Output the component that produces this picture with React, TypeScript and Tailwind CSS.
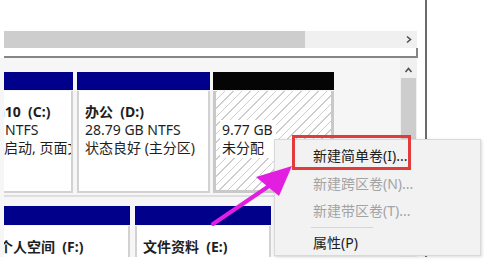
function Chevron({ dir }: { dir: "right" | "up" }) {
  return (
    <svg width="9" height="9" viewBox="0 0 9 9" className="block">
      {dir === "right" ? (
        <path d="M3 1.5 L6.5 4.5 L3 7.5" fill="none" stroke="#505050" strokeWidth="1.6" />
      ) : (
        <path d="M1.5 6 L4.5 2.5 L7.5 6" fill="none" stroke="#505050" strokeWidth="1.6" />
      )}
    </svg>
  );
}

function Bar({ black }: { black?: boolean }) {
  return <div className={black ? "h-[18px] shrink-0 bg-[#050505]" : "h-[18px] shrink-0 bg-[#00008a]"} />;
}

export default function App() {
  return (
    <div className="relative w-[485px] h-[265px] overflow-hidden bg-white text-[14px] leading-[18px] text-[#1e1e1e] font-['Noto_Sans','Noto_Sans_CJK_SC',sans-serif]">
      <div className="w-[427px] h-[257px] border-r-2 border-[#6a6a6a] flex flex-col">
        <div className="h-[31px] shrink-0" />
        {/* horizontal scrollbar */}
        <div className="ml-[4px] mr-[8px] h-[17px] shrink-0 flex bg-[#f0f0f0]">
          <div className="w-[301px] bg-[#cdcdcd]" />
          <div className="flex-1" />
          <div className="w-[17px] flex items-center justify-center">
            <Chevron dir="right" />
          </div>
        </div>
        <div className="ml-[4px] mr-[7px] h-[10px] shrink-0 border-b-2 border-r-2 border-[#858585]" />

        {/* disk area */}
        <div className="flex-1 min-h-0 flex overflow-hidden">
          <div className="flex-1 flex flex-col pl-[4px] bg-[#f6f6f6] overflow-hidden">
            <div className="mt-[14px] shrink-0 flex h-[125px] border-b-2 border-[#dedede]">
              <div className="w-[69px] flex flex-col">
                <Bar />
                <div className="h-[102px] shrink-0 mt-[1px] bg-white border-r-2 border-b-2 border-[#d2d2d2] overflow-hidden whitespace-nowrap pt-[12px]">
                  <div className="font-bold -ml-[26px]">Win10 &nbsp;(C:)</div>
                  <div className="ml-[1px]">NTFS</div>
                  <div>启动, 页面文件</div>
                </div>
              </div>
              <div className="w-[133px] ml-[4px] flex flex-col">
                <Bar />
                <div className="h-[102px] shrink-0 mt-[1px] bg-white border-2 border-t-0 border-[#d2d2d2] pl-[6px] pt-[12px] whitespace-nowrap">
                  <div className="font-bold">办公 &nbsp;(D:)</div>
                  <div>28.79 GB NTFS</div>
                  <div>状态良好 (主分区)</div>
                </div>
              </div>
              <div className="w-[121px] ml-[3px] flex flex-col">
                <Bar black />
                <div className="h-[102px] shrink-0 mt-[1px] border-[3px] border-t-0 border-[#c9c9c9] bg-[repeating-linear-gradient(135deg,#cdcdcd_0px,#cdcdcd_1px,#ffffff_1px,#ffffff_6px)] pl-[4px] pt-[29px] whitespace-nowrap">
                  <div className="w-[56px] bg-white pl-[2px] py-[1px]">
                    <div>9.77 GB</div>
                    <div>未分配</div>
                  </div>
                </div>
              </div>
            </div>

            <div className="mt-[9px] shrink-0 flex">
              <div className="w-[126px] flex flex-col">
                <div className="h-[19px] bg-[#00008a]" />
                <div className="h-[40px] mt-[1px] bg-white border-r-2 border-[#d2d2d2] overflow-hidden whitespace-nowrap pt-[12px]">
                  <div className="font-bold -ml-[5px]">个人空间 &nbsp;(F:)</div>
                </div>
              </div>
              <div className="w-[136px] ml-[5px] flex flex-col">
                <div className="h-[19px] bg-[#00008a]" />
                <div className="h-[40px] mt-[1px] bg-white border-2 border-b-0 border-t-0 border-[#d2d2d2] pl-[6px] pt-[12px] whitespace-nowrap">
                  <div className="font-bold">文件资料 &nbsp;(E:)</div>
                </div>
              </div>
            </div>
          </div>

          {/* vertical scrollbar */}
          <div className="w-[17px] mr-[8px] bg-[#f0f0f0] flex flex-col">
            <div className="h-[20px] shrink-0 flex items-end justify-center pb-[3px]">
              <Chevron dir="up" />
            </div>
            <div className="mx-[1px] h-[120px] shrink-0 bg-[#cdcdcd]" />
          </div>
        </div>
      </div>

      {/* context menu */}
      <div className="absolute left-[274px] top-[139px] w-[207px] h-[117px] bg-[#f2f2f2] border border-[#d9d9d9] shadow-[1px_1px_3px_rgba(0,0,0,0.15)] pt-[2px] whitespace-nowrap">
        <div className="h-[28px] flex items-center pl-[38px] text-[#202020]">新建简单卷(I)...</div>
        <div className="h-[27px] flex items-center pl-[38px] text-[#a3a3a3]">新建跨区卷(N)...</div>
        <div className="h-[27px] flex items-center pl-[38px] text-[#a3a3a3]">新建带区卷(T)...</div>
        <div className="h-[7px] flex items-center pl-[36px]">
          <div className="w-[62px] h-px bg-[#d6d6d6]" />
        </div>
        <div className="h-[24px] flex items-center pl-[38px] text-[#202020]">属性(P)</div>
      </div>

      {/* red highlight */}
      <div className="absolute left-[292px] top-[135px] w-[119px] h-[35px] border-[3px] border-[#e23b3b]" />

      {/* magenta arrow */}
      <svg className="absolute left-0 top-0" width="485" height="265" viewBox="0 0 485 265">
        <line x1="213" y1="224" x2="272" y2="184" stroke="#e21fe0" strokeWidth="4" strokeLinecap="round" />
        <polygon points="292,166 256,177 279,196" fill="#e21fe0" />
      </svg>
    </div>
  );
}
